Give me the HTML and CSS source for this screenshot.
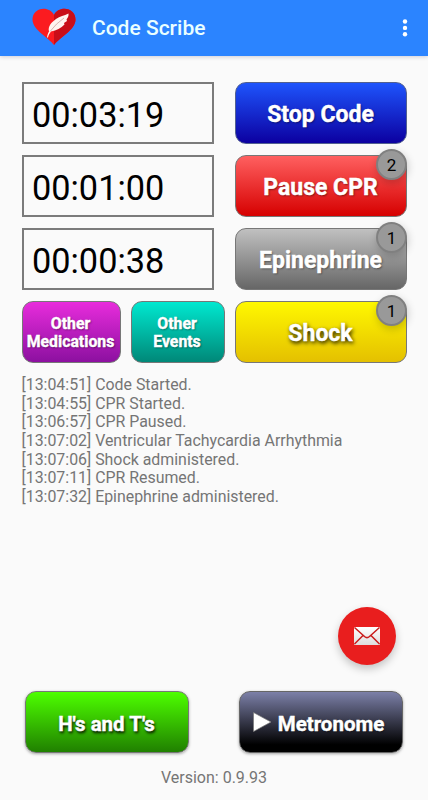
FILE: index.html
```html
<!DOCTYPE html>
<html lang="en">
<head>
<meta charset="utf-8">
<title>Code Scribe</title>
<link rel="stylesheet" href="styles.css">
</head>
<body>
<header class="appbar">
  <svg class="logo" width="44" height="38" viewBox="0 0 44 38">
    <path fill="#fb1b20" d="M22 37C17 30 .5 22 .5 11.500C.5 5 5.500 .8 11.500 .8C16 .8 20 3 22 7C24 3 28 .8 32.500 .8C38.500 .8 43.500 5 43.500 11.500C43.500 22 27 30 22 37Z"/>
    <path fill="#c90e18" d="M22 37V7C24 3 28 .8 32.500 .8C38.500 .8 43.500 5 43.500 11.500C43.500 22 27 30 22 37Z"/>
    <path fill="#fff4ef" d="M15 29.500C15.500 26.500 16 25 17 23.500C15.500 18 20 14 24 11C28 8 32 8 36.500 5.500C37 8 35.500 10 34.500 11.500L35 13L32 15L32.500 16.500C29 20 24.500 22.500 19 23.500C17.500 25.500 16.500 27 16 29.500Z"/>
    <path fill="none" stroke="#b98a86" stroke-width=".6" d="M18 23.500Q24 15.500 32 10"/>
  </svg>
  <h1 class="title">Code Scribe</h1>
  <svg class="more" width="6" height="20" viewBox="0 0 6 20" fill="#fff"><circle cx="3" cy="3.500" r="2.200"/><circle cx="3" cy="9.900" r="2.200"/><circle cx="3" cy="16.300" r="2.200"/></svg>
</header>
<main class="content">
  <section class="grid">
    <div class="timer">00:03:19</div>
    <button class="btn stop">Stop Code</button>
    <div class="timer">00:01:00</div>
    <button class="btn pause">Pause CPR<span class="badge">2</span></button>
    <div class="timer">00:00:38</div>
    <button class="btn epi">Epinephrine<span class="badge">1</span></button>
    <div class="pair">
      <button class="btn small meds">Other<br>Medications</button>
      <button class="btn small events">Other<br>Events</button>
    </div>
    <button class="btn shock">Shock<span class="badge">1</span></button>
  </section>
  <section class="log">
    <div>[13:04:51] Code Started.</div>
    <div>[13:04:55] CPR Started.</div>
    <div>[13:06:57] CPR Paused.</div>
    <div>[13:07:02] Ventricular Tachycardia Arrhythmia</div>
    <div>[13:07:06] Shock administered.</div>
    <div>[13:07:11] CPR Resumed.</div>
    <div>[13:07:32] Epinephrine administered.</div>
  </section>
</main>
<button class="fab" aria-label="Send email">
  <svg width="28" height="20" viewBox="0 0 28 20">
    <defs><linearGradient id="paper" x2="0" y2="1"><stop offset="0" stop-color="#fff"/><stop offset="1" stop-color="#dedede"/></linearGradient></defs>
    <rect x="1" y="1" width="26" height="18" rx="1" fill="url(#paper)"/>
    <path fill="none" stroke="#c91c1c" stroke-width="1.500" d="M1.500 1.500L11.500 10.500Q14 12.700 16.500 10.500L26.500 1.500M1.500 18L10 9.500M26.500 18L18 9.500"/>
  </svg>
</button>
<footer class="footer">
  <div class="actions">
    <button class="btn hts">H's and T's</button>
    <button class="btn metro"><svg class="play" width="20" height="22" viewBox="0 0 20 22"><path fill="#fff" stroke="#777" stroke-width=".7" d="M1.500 1.500L19 11L1.500 20.500Z"/></svg>Metronome</button>
  </div>
  <div class="version">Version: 0.9.93</div>
</footer>
</body>
</html>
```
FILE: styles.css
```css
* { box-sizing: border-box; }
body {
  margin: 0;
  height: 800px;
  display: flex;
  flex-direction: column;
  background: #fafafa;
  font-family: Roboto, "Liberation Sans", sans-serif;
  overflow: hidden;
}
.appbar {
  height: 56px;
  flex: none;
  display: flex;
  align-items: center;
  padding: 0 20px 0 32px;
  background: #2b84ff;
  box-shadow: 0 1px 4px rgba(0, 0, 60, .18);
}
.logo { margin-top: -2px; }
.title {
  margin: 0 auto 0 16px;
  color: #eaffff;
  font-size: 21px;
  font-weight: 500;
}
.more { margin-top: -1px; }
.content { flex: 1; padding: 25.500px 21px 0 21.500px; }
.grid {
  display: grid;
  grid-template-columns: 192.500px 172px;
  grid-auto-rows: 62.500px;
  column-gap: 21px;
  row-gap: 10.500px;
}
.timer {
  border: 2px solid #7b7b7b;
  padding-left: 8.500px;
  font-size: 34.300px;
  line-height: 62px;
  color: #000;
}
.btn {
  position: relative;
  display: flex;
  align-items: center;
  justify-content: center;
  padding: 3px 1px 0 0;
  border: 1.500px solid #777;
  border-radius: 11px;
  color: #fff;
  font-family: inherit;
  font-size: 23px;
  font-weight: 700;
  -webkit-text-stroke: .4px #fff;
  text-shadow: 1px 1px 2px rgba(0, 0, 0, .45);
}
.stop { background: linear-gradient(#1e54fc, #0c00a0); border-color: #526090; }
.pause { background: linear-gradient(#ff6060, #d60000); }
.epi { background: linear-gradient(#c0c0c0, #666); }
.shock { background: linear-gradient(#fff800, #e4c000); text-shadow: 1px 2px 4px #000; }
.pair { display: grid; grid-template-columns: 99px 94px; column-gap: 10px; }
.small { font-size: 15.800px; line-height: 18.500px; }
.meds { background: linear-gradient(#e82cdc, #8c10a0); }
.events { background: linear-gradient(#00e8d0, #008878); }
.badge {
  position: absolute;
  top: -7px;
  right: -1px;
  width: 31px;
  height: 31px;
  border: 2px solid #808080;
  border-radius: 50%;
  background: #999;
  color: #000;
  font-size: 17px;
  font-weight: 400;
  line-height: 28px;
  text-align: center;
  text-shadow: none;
  -webkit-text-stroke: 0;
  box-shadow: 1px 3px 8px rgba(0, 0, 0, .2);
}
.log {
  margin-top: 13px;
  color: #757575;
  font-size: 15.900px;
  line-height: 18.650px;
}
.fab {
  align-self: flex-end;
  flex: none;
  display: flex;
  align-items: center;
  justify-content: center;
  width: 58px;
  height: 58px;
  margin-right: 32px;
  padding: 0;
  border: 0;
  border-radius: 50%;
  background: #e91e1e;
  box-shadow: 0 4px 8px rgba(0, 0, 0, .22);
}
.footer { flex: none; height: 135px; padding: 26px 25px 0; }
.actions { display: flex; justify-content: space-between; }
.actions .btn { width: 164px; height: 62px; font-size: 20.500px; box-shadow: 0 1px 3px rgba(0, 0, 0, .35); }
.actions .hts { background: linear-gradient(#4dff00, #208000); text-shadow: 1px 2px 3px #000; }
.actions .metro { background: linear-gradient(#7c80a8, #000 88%); border-color: #666; gap: 6px; padding-right: 6px; }
.play { margin-top: -3px; }
.version {
  margin-top: 15px;
  text-align: center;
  color: #757575;
  font-size: 16px;
  line-height: 20px;
}
```
